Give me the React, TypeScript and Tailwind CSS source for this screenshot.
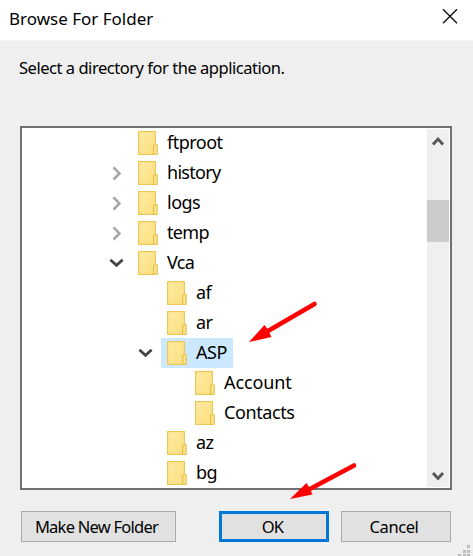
type Row = { name: string; indent: string; state?: 'closed' | 'open'; selected?: boolean; text: string };

const rows: Row[] = [
  { name: 'ftproot', indent: 'pl-[87px]', text: 'tracking-[-0.5px]' },
  { name: 'history', indent: 'pl-[87px]', state: 'closed', text: 'tracking-[-0.7px]' },
  { name: 'logs', indent: 'pl-[87px]', state: 'closed', text: 'tracking-[-0.5px]' },
  { name: 'temp', indent: 'pl-[87px]', state: 'closed', text: 'tracking-[-0.7px]' },
  { name: 'Vca', indent: 'pl-[87px]', state: 'open', text: 'tracking-[-0.7px]' },
  { name: 'af', indent: 'pl-[116px]', text: 'tracking-[-0.5px]' },
  { name: 'ar', indent: 'pl-[116px]', text: 'tracking-[-0.5px]' },
  { name: 'ASP', indent: 'pl-[116px]', state: 'open', selected: true, text: 'tracking-[-0.5px]' },
  { name: 'Account', indent: 'pl-[144px]', text: 'tracking-[-0.1px]' },
  { name: 'Contacts', indent: 'pl-[144px]', text: 'tracking-[-0.4px]' },
  { name: 'az', indent: 'pl-[116px]', text: 'tracking-[-0.5px]' },
  { name: 'bg', indent: 'pl-[116px]', text: 'tracking-[-0.5px]' },
];

function Folder() {
  return (
    <svg width="20" height="24" viewBox="0 0 20 24" className="shrink-0">
      <defs>
        <linearGradient id="folder" x1="0" y1="0" x2="1" y2="1">
          <stop offset="0" stopColor="#ffeba2" />
          <stop offset="1" stopColor="#fbdf80" />
        </linearGradient>
      </defs>
      <rect x="0.6" y="0.6" width="16.8" height="22.8" fill="url(#folder)" stroke="#ebc754" strokeWidth="1.2" />
      <path d="M15.6 23.3V14.8L16.5 13.7H19.2V23.3Z" fill="#fce493" stroke="#e5be43" strokeWidth="1.1" />
    </svg>
  );
}

function Expander({ state }: { state?: 'closed' | 'open' }) {
  return (
    <svg width="16" height="16" viewBox="0 0 16 16" fill="none" strokeWidth="2.6" className="mr-[13px] shrink-0">
      {state === 'closed' && <path d="M4.5 2.3L10.4 8.4L4.5 14.5" stroke="#a7a7a7" />}
      {state === 'open' && <path d="M1.4 4.8L7.5 10.4L13.6 4.8" stroke="#444" strokeWidth="2.8" />}
    </svg>
  );
}

function TreeRow({ row }: { row: Row }) {
  return (
    <div className={`flex h-[30px] items-center ${row.indent}`}>
      <Expander state={row.state} />
      <div className={`-ml-[6px] flex h-[30px] items-center pl-[6px] ${row.selected ? 'w-[72px] bg-[#cce8ff]' : ''}`}>
        <Folder />
        <span className={`mb-[2px] ml-[9px] text-[18px] leading-[28px] ${row.text}`}>{row.name}</span>
      </div>
    </div>
  );
}

function ScrollArrow({ up }: { up?: boolean }) {
  return (
    <svg width="22" height="22" viewBox="0 0 22 22" fill="none" stroke="#555" strokeWidth="2.8">
      <path d={up ? 'M6 15.5L11 10L16 15.5' : 'M6 8L11 13.5L16 8'} />
    </svg>
  );
}

function RedArrow({ className, shaft, head }: { className: string; shaft: string; head: string }) {
  return (
    <svg width="72" height="46" viewBox="0 0 72 46" className={`absolute ${className}`}>
      <path d={shaft} stroke="#ff0000" strokeWidth="4.6" strokeLinecap="round" />
      <path d={head} fill="#ff0000" />
    </svg>
  );
}

export default function App() {
  return (
    <div className="relative flex h-[556px] w-[473px] flex-col overflow-hidden bg-[#efefef] font-['Noto_Sans','Open_Sans',sans-serif] text-black">
      <header className="flex h-[41px] shrink-0 items-start justify-between border-b border-[#f5f5f5] bg-white pr-[15px] pl-[9px]">
        <h1 className="mt-[6px] text-[17px] leading-[26px] whitespace-nowrap">Browse For Folder</h1>
        <svg width="16" height="16" viewBox="0 0 16 16" className="mt-[8px]">
          <path d="M1 1.3L15 15.3M15 1.3L1 15.3" stroke="#111" strokeWidth="1.4" />
        </svg>
      </header>
      <p className="mt-[14px] ml-[19px] h-[71px] shrink-0 text-[16.5px] leading-[26px] tracking-[-0.47px] whitespace-nowrap">
        Select a directory for the application.
      </p>
      <div className="ml-[20px] flex h-[364px] w-[432px] shrink-0 border-2 border-[#707070] bg-white">
        <div className="min-w-0 grow">
          {rows.map((row) => (
            <TreeRow key={row.name} row={row} />
          ))}
        </div>
        <div className="my-px mr-px flex w-[22px] shrink-0 flex-col bg-[#efefef]">
          <ScrollArrow up />
          <div className="mt-[49px] h-[42px] bg-[#cccccc]" />
          <div className="grow" />
          <ScrollArrow />
        </div>
      </div>
      <footer className="mt-[21px] ml-[21px] flex h-[31px] shrink-0 text-[16.5px] leading-[26px] tracking-[-0.75px] whitespace-nowrap">
        <button className="flex w-[155px] items-center justify-center border border-[#a9a9a9] bg-[#e1e1e1] pr-[4px]">
          <span>Make New Folder</span>
        </button>
        <button className="ml-[43px] flex w-[110px] items-center justify-center border-[3px] border-[#0078d7] bg-[#e1e1e1] pr-[3px]">
          <span>OK</span>
        </button>
        <button className="ml-[12px] flex w-[110px] items-center justify-center border border-[#a9a9a9] bg-[#e1e1e1] pr-[4px]">
          <span className="tracking-[-0.4px]">Cancel</span>
        </button>
      </footer>
      <RedArrow className="top-[300px] left-[248px]" shaft="M66.5 4L20 31" head="M1 42L16.5 25L19.5 29L23.5 37Z" />
      <RedArrow className="top-[457px] left-[288px]" shaft="M66 8.5L20 33" head="M2 42L18.5 26L21 30L24.5 37.5Z" />
      <svg width="12" height="11" viewBox="0 0 12 11" fill="#bdbdbd" className="absolute right-[3px] bottom-0">
        <path d="M9 0h3v3h-3zM9 5h3v3h-3zM5 5h3v3h-3zM9 9h3v2h-3zM5 9h3v2h-3zM0 9h3v2h-3z" />
      </svg>
    </div>
  );
}
